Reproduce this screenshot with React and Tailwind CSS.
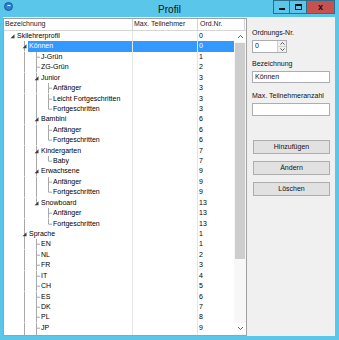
import React from 'react';

const tree = [
  {
    t: 'Skilehrerprofil', n: '0', c: [
      {
        t: 'Können', n: '0', sel: true, c: [
          { t: 'J-Grün', n: '1' },
          { t: 'ZG-Grün', n: '2' },
          { t: 'Junior', n: '3', c: [
            { t: 'Anfänger', n: '3' },
            { t: 'Leicht Fortgeschritten', n: '3' },
            { t: 'Fortgeschritten', n: '3' },
          ] },
          { t: 'Bambini', n: '6', c: [
            { t: 'Anfänger', n: '6' },
            { t: 'Fortgeschritten', n: '6' },
          ] },
          { t: 'Kindergarten', n: '7', c: [{ t: 'Baby', n: '7' }] },
          { t: 'Erwachsene', n: '9', c: [
            { t: 'Anfänger', n: '9' },
            { t: 'Fortgeschritten', n: '9' },
          ] },
          { t: 'Snowboard', n: '13', c: [
            { t: 'Anfänger', n: '13' },
            { t: 'Fortgeschritten', n: '13' },
          ] },
        ],
      },
      {
        t: 'Sprache', n: '1', open: true, c: [
          { t: 'EN', n: '1' }, { t: 'NL', n: '2' }, { t: 'FR', n: '3' },
          { t: 'IT', n: '4' }, { t: 'CH', n: '5' }, { t: 'ES', n: '6' },
          { t: 'DK', n: '7' }, { t: 'PL', n: '8' }, { t: 'JP', n: '9' },
        ],
      },
    ],
    open: true,
  },
];

function flatten(nodes, depth, trail, out, open) {
  nodes.forEach((node, i) => {
    const last = i === nodes.length - 1 && !open;
    out.push({ ...node, depth, trail, last });
    if (node.c) flatten(node.c, depth + 1, [...trail, !last], out, node.open);
  });
  return out;
}

const rows = flatten(tree, 0, [], [], false);
const RH = 10.43;

function TreeLines({ row }) {
  const w = 12 + 12 * row.depth;
  const x = 8 + 12 * row.depth + 0.5;
  const mid = RH / 2;
  const lines = [];
  for (let a = 1; a < row.depth; a++) {
    if (row.trail[a]) {
      const ax = 8 + 12 * a + 0.5;
      lines.push(<line key={a} x1={ax} y1="0" x2={ax} y2={RH} stroke="#a8a8a8" strokeWidth="1" />);
    }
  }
  return (
    <svg width={w} height={RH} className="shrink-0">
      {lines}
      {row.depth > 0 && (
        <line x1={x} y1="0" x2={x} y2={row.last ? mid : RH} stroke="#a8a8a8" strokeWidth="1" />
      )}
      {!row.c && row.depth > 0 && (
        <line x1={x} y1={mid} x2={x + 3.5} y2={mid} stroke="#a8a8a8" strokeWidth="1" />
      )}
      {row.c && (
        <polygon points={`${x + 2},${mid - 2} ${x + 2},${mid + 2} ${x - 2},${mid + 2}`} fill="#3c3c3c" />
      )}
    </svg>
  );
}

function Chevron({ up }) {
  return (
    <svg width="7" height="5" viewBox="0 0 7 5">
      <polyline points={up ? '1,4 3.5,1.5 6,4' : '1,1 3.5,3.5 6,1'} fill="none" stroke="#606060" strokeWidth="1" />
    </svg>
  );
}

function Btn({ children }) {
  return (
    <div className="h-[14px] border border-[#adadad] bg-[#e1e1e1] flex items-center justify-center text-[#111]">
      {children}
    </div>
  );
}

export default function App() {
  return (
    <div
      className="w-[339px] h-[340px] bg-[#5ac7ea] flex flex-col text-[7px] text-[#000] overflow-hidden"
      style={{ fontFamily: '"Liberation Sans", Arial, sans-serif' }}
    >
      {/* title bar */}
      <div className="h-[17px] flex items-start relative shrink-0">
        <div className="w-[9px] h-[9px] rounded-full bg-[#2f7fcf] border border-[#1b5aa0] mt-[2px] ml-[4px] flex items-center justify-center">
          <div className="w-[4px] h-[3px] rounded-full border-t border-white" />
        </div>
        <div className="absolute left-0 right-0 top-[2px] text-center text-[10px] text-[#111]">Profil</div>
        <div className="ml-auto mr-[4px] flex h-[14px]">
          <div className="w-[17px] border border-[#2b6f8c] bg-[#5ac7ea] flex items-end justify-center pb-[3px]">
            <div className="w-[6px] h-[2px] bg-[#111]" />
          </div>
          <div className="w-[17px] border border-l-0 border-[#2b6f8c] bg-[#5ac7ea] flex items-center justify-center">
            <div className="w-[7px] h-[6px] border border-t-2 border-[#111]" />
          </div>
          <div className="w-[28px] border border-l-0 border-[#2b6f8c] bg-[#c75050] flex items-center justify-center text-[9px] font-bold text-[#111] leading-none">
            x
          </div>
        </div>
      </div>

      {/* body */}
      <div className="flex-1 ml-[3px] mr-[4px] mb-[4px] bg-[#f0f0f0] flex">
        {/* list */}
        <div className="w-[244px] h-[318px] mt-[1px] border border-[#a0a0a0] bg-white flex flex-col">
          <div className="h-[12px] flex border-b border-[#d5d5d5] shrink-0 text-[#222]">
            <div className="w-[129px] border-r border-[#d5d5d5] pl-[1px] flex items-center">Bezeichnung</div>
            <div className="w-[65px] border-r border-[#d5d5d5] pl-[1px] flex items-center">Max. Teilnehmer</div>
            <div className="w-[47px] border-r border-[#d5d5d5] pl-[2px] flex items-center">Ord.Nr.</div>
          </div>
          <div className="flex-1 flex">
            <div className="w-[230px] flex flex-col">
              {rows.map((r, i) => (
                <div key={i} className="flex h-[10.43px] leading-[10.43px]">
                  <div className="w-[129px] border-r border-[#e6e6e6] flex items-center overflow-hidden whitespace-nowrap">
                    <TreeLines row={r} />
                    <span className={r.sel ? 'flex-1 bg-[#3399ff] text-white h-full pl-[1px]' : 'pl-[1px]'}>{r.t}</span>
                  </div>
                  <div className={`w-[65px] border-r border-[#e6e6e6] ${r.sel ? 'bg-[#3399ff]' : ''}`} />
                  <div className={`w-[36px] pl-[1px] ${r.sel ? 'bg-[#3399ff] text-white' : ''}`}>{r.n}</div>
                </div>
              ))}
              <div className="flex flex-1">
                <div className="w-[129px] border-r border-[#e6e6e6] relative">
                  <div className="absolute left-[20px] top-0 bottom-0 w-px bg-[#a8a8a8]" />
                  <div className="absolute left-[32px] top-0 bottom-0 w-px bg-[#a8a8a8]" />
                </div>
                <div className="w-[65px] border-r border-[#e6e6e6]" />
              </div>
            </div>
            {/* scrollbar */}
            <div className="w-[12px] flex flex-col bg-[#f7f7f7]">
              <div className="h-[11px] flex items-center justify-center bg-white"><Chevron up /></div>
              <div className="h-[216px] mt-[1px] mx-[1px] bg-[#cdcdcd]" />
              <div className="flex-1" />
              <div className="h-[11px] flex items-center justify-center bg-white mb-[1px]"><Chevron /></div>
            </div>
          </div>
        </div>

        {/* right panel */}
        <div className="flex-1 pl-[5px] pr-[5px] pt-[11px] flex flex-col text-[#111]">
          <div className="h-[9px] leading-[9px]">Ordnungs-Nr.</div>
          <div className="mt-[3px] w-[35px] h-[13px] border border-[#abadb3] bg-white flex">
            <div className="flex-1 pl-[2px] flex items-center">0</div>
            <div className="w-[9px] flex flex-col border-l border-[#d0d0d0]">
              <div className="flex-1 flex items-center justify-center border-b border-[#d0d0d0] bg-[#f0f0f0]">
                <svg width="5" height="3"><polyline points="0.5,2.5 2.5,0.5 4.5,2.5" fill="none" stroke="#555" /></svg>
              </div>
              <div className="flex-1 flex items-center justify-center bg-[#f0f0f0]">
                <svg width="5" height="3"><polyline points="0.5,0.5 2.5,2.5 4.5,0.5" fill="none" stroke="#555" /></svg>
              </div>
            </div>
          </div>
          <div className="mt-[6px] h-[9px] leading-[9px]">Bezeichnung</div>
          <div className="mt-[3px] h-[12px] border border-[#abadb3] bg-white pl-[2px] flex items-center">Können</div>
          <div className="mt-[8px] h-[9px] leading-[9px]">Max. Teilnehmeranzahl</div>
          <div className="mt-[3px] h-[13px] border border-[#abadb3] bg-white" />
          <div className="mt-[24px] flex flex-col gap-[7px] pl-[1px]">
            <Btn>Hinzufügen</Btn>
            <Btn>Ändern</Btn>
            <Btn>Löschen</Btn>
          </div>
        </div>
      </div>
    </div>
  );
}
